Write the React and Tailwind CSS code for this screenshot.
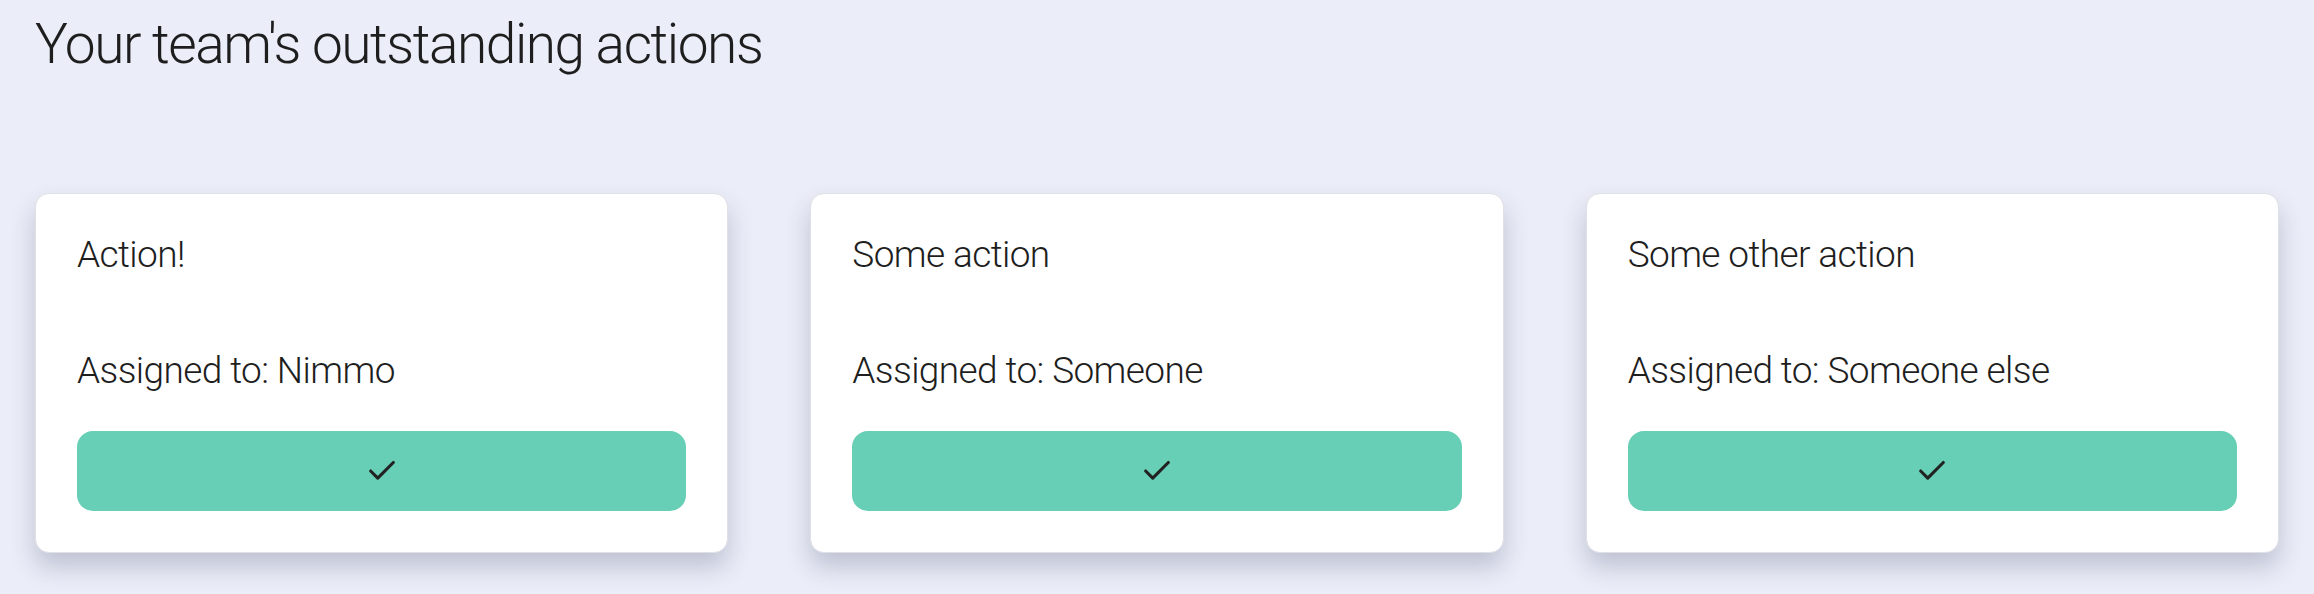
import { FiCheck } from "react-icons/fi"

const actions = [
  { id: 1, title: "Action!", assignee: "Nimmo" },
  { id: 2, title: "Some action", assignee: "Someone" },
  { id: 3, title: "Some other action", assignee: "Someone else" },
]

function ActionCard({ action }) {
  return (
    <div className="bg-white rounded-[14px] border border-[#e0e1e7] shadow-[0_14px_24px_rgba(50,60,90,0.24)] pt-[39px] pb-[41px] px-[41px] flex flex-col">
      <p className="text-[37px] leading-[44px] font-light tracking-[-0.6px] text-[#1e1e1e]">{action.title}</p>
      <p className="mt-[72px] text-[37px] leading-[44px] font-light tracking-[-0.6px] text-[#1e1e1e]">
        Assigned to: {action.assignee}
      </p>
      <button className="mt-[38px] h-[80px] w-full rounded-[16px] bg-[#66cfb5] flex items-center justify-center">
        <FiCheck className="text-[#222] w-[34px] h-[34px] stroke-[2.2]" />
      </button>
    </div>
  )
}

export default function App() {
  return (
    <div
      className="min-h-[594px] bg-[#ebedf8] px-[35px] pt-[12px] pb-[40px]"
      style={{ fontFamily: "Roboto, 'Liberation Sans', sans-serif" }}
    >
      <h1 className="text-[55px] leading-[64px] font-light tracking-[-1.45px] text-[#1e1e1e]">
        Your team's outstanding actions
      </h1>
      <div className="mt-[117px] grid grid-cols-3 gap-[82px]">
        {actions.map((action) => (
          <ActionCard key={action.id} action={action} />
        ))}
      </div>
    </div>
  )
}
